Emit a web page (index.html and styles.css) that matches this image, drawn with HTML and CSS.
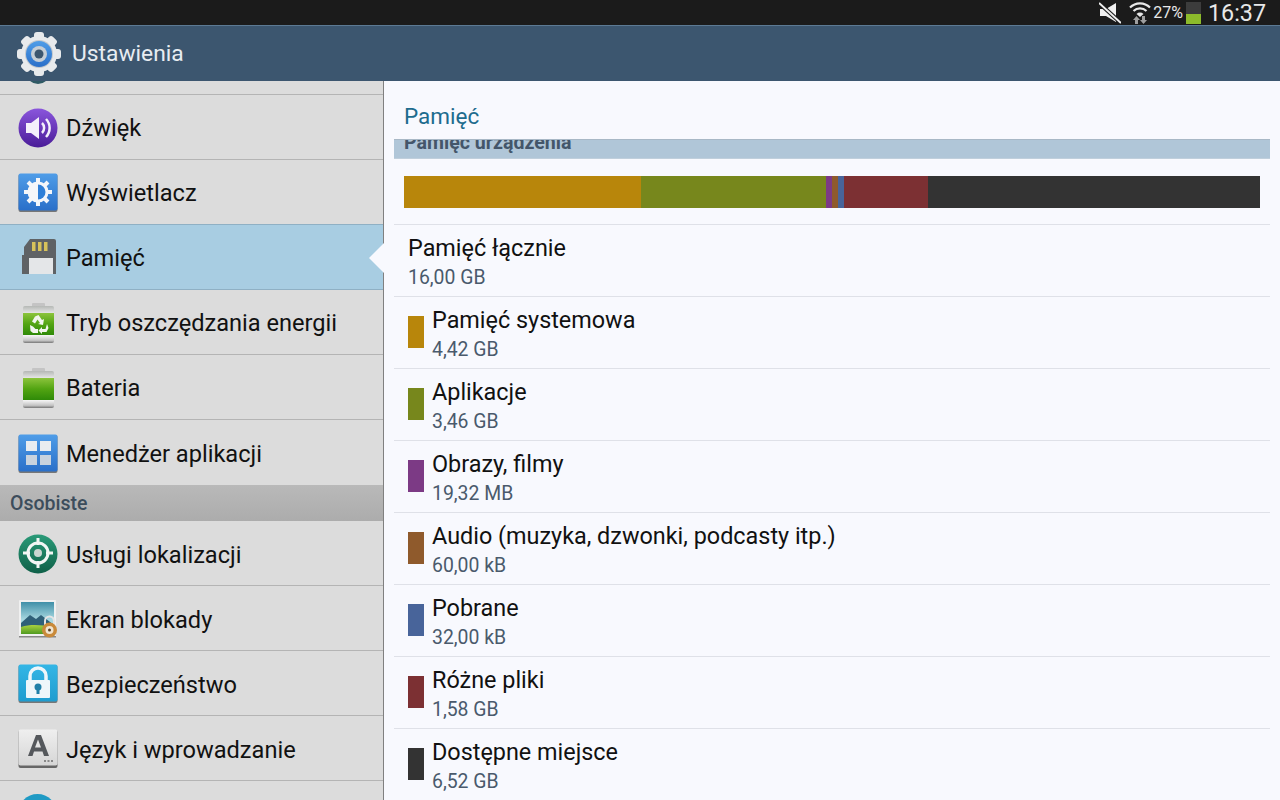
FILE: index.html
```html
<!DOCTYPE html>
<html lang="pl">
<head>
  <meta charset="UTF-8" />
  <title>Ustawienia</title>
  <link rel="stylesheet" href="styles.css">
</head>
<body>
  <!-- Shared icon gradients -->
  <svg class="icon-defs" width="0" height="0">
    <defs>
      <linearGradient id="g-blue" x1="0" y1="0" x2="0" y2="1">
        <stop offset="0" stop-color="#4f9de8"/>
        <stop offset="1" stop-color="#2a6fc9"/>
      </linearGradient>
      <linearGradient id="g-purple" x1="0" y1="0" x2="0" y2="1">
        <stop offset="0" stop-color="#8a55dc"/>
        <stop offset="1" stop-color="#4a1c98"/>
      </linearGradient>
      <linearGradient id="g-silver" x1="0" y1="0" x2="0" y2="1">
        <stop offset="0" stop-color="#b5b8b5"/>
        <stop offset="0.2" stop-color="#e8e8e8"/>
        <stop offset="0.8" stop-color="#f2f2f2"/>
        <stop offset="0.93" stop-color="#c4c4c4"/>
        <stop offset="1" stop-color="#777"/>
      </linearGradient>
      <linearGradient id="g-green" x1="0" y1="0" x2="0" y2="1">
        <stop offset="0" stop-color="#8cc43c"/>
        <stop offset="0.5" stop-color="#52a412"/>
        <stop offset="1" stop-color="#2f8a08"/>
      </linearGradient>
      <linearGradient id="g-teal" x1="0" y1="0" x2="0" y2="1">
        <stop offset="0" stop-color="#2a9a78"/>
        <stop offset="1" stop-color="#0f6048"/>
      </linearGradient>
      <linearGradient id="g-sky" x1="0" y1="0" x2="0" y2="1">
        <stop offset="0" stop-color="#3f8fa8"/>
        <stop offset="0.55" stop-color="#a8d8e0"/>
      </linearGradient>
      <linearGradient id="g-grass" x1="0" y1="0" x2="0" y2="1">
        <stop offset="0" stop-color="#a8d040"/>
        <stop offset="1" stop-color="#4f9a20"/>
      </linearGradient>
      <linearGradient id="g-key" x1="0" y1="0" x2="0" y2="1">
        <stop offset="0" stop-color="#efefef"/>
        <stop offset="1" stop-color="#d6d6d6"/>
      </linearGradient>
      <linearGradient id="g-cyan" x1="0" y1="0" x2="0" y2="1">
        <stop offset="0" stop-color="#34b6e6"/>
        <stop offset="1" stop-color="#1f9ccf"/>
      </linearGradient>
    </defs>
  </svg>

  <!-- Status bar -->
  <div class="status-bar">
    <svg class="st-mute" width="22" height="22" viewBox="0 0 22 22">
      <path d="M1 7h6l10-6v19L7 14H1z" fill="#f0f0f0"/>
      <path d="M0 1l22 20" stroke="#1b1b1b" stroke-width="4"/>
      <path d="M0 1l22 20" stroke="#f0f0f0" stroke-width="2"/>
    </svg>
    <svg class="st-wifi" width="22" height="24" viewBox="0 0 22 24">
      <path d="M1 6.500a14 14 0 0 1 20 0M4.500 10a9.500 9.500 0 0 1 13 0" fill="none" stroke="#e8e8e8" stroke-width="2.200"/>
      <path d="M7.500 13a5 5 0 0 1 7 0l-3.500 3z" fill="#e8e8e8"/>
      <path d="M6 23v-4H4l3.500-4 3.500 4H9v4zM13 15v4h-2l3.500 4 3.500-4h-2v-4z" fill="#a0a0a0"/>
    </svg>
    <span class="st-pct">27%</span>
    <div class="st-battery"><div class="st-battery-fill"></div></div>
    <span class="st-time">16:37</span>
  </div>

  <!-- Action bar -->
  <div class="action-bar">
    <svg class="app-icon" width="46" height="48" viewBox="0 0 46 48">
      <circle cx="23" cy="24" r="18" fill="#e8eaec"/>
      <g fill="#e8eaec">
        <rect x="18" y="2" width="10" height="44" rx="3"/>
        <rect x="18" y="2" width="10" height="44" rx="3" transform="rotate(45 23 24)"/>
        <rect x="18" y="2" width="10" height="44" rx="3" transform="rotate(90 23 24)"/>
        <rect x="18" y="2" width="10" height="44" rx="3" transform="rotate(135 23 24)"/>
      </g>
      <circle cx="23" cy="24" r="14" fill="#c3c8cd"/>
      <circle cx="23" cy="24" r="13" fill="url(#g-blue)"/>
      <circle cx="23" cy="24" r="8" fill="#c6ced6"/>
      <circle cx="23" cy="24" r="4.500" fill="#3c566f"/>
    </svg>
    <span class="app-title">Ustawienia</span>
  </div>

  <div class="content">
    <!-- Left list -->
    <div class="sidebar">
      <div class="peek"><div class="peek-icon"></div></div>

      <div class="nav-row">
        <svg class="nav-icon" viewBox="0 0 40 40">
          <circle cx="20" cy="20" r="19.500" fill="url(#g-purple)"/>
          <path d="M8 15h5l8-6v22l-8-6H8z" fill="#f4f0fb"/>
          <path d="M24 15a7 7 0 0 1 0 10M28 11a13 13 0 0 1 0 18" fill="none" stroke="#f4f0fb" stroke-width="2.500"/>
        </svg>
        <span>Dźwięk</span>
      </div>

      <div class="nav-row">
        <svg class="nav-icon" viewBox="0 0 40 40">
          <rect x="0.500" y="1" width="39" height="38" rx="2" fill="#777"/>
          <rect x="0.500" y="0.500" width="39" height="37" rx="2" fill="url(#g-blue)"/>
          <g stroke="#f4f6fa" stroke-width="4">
            <path d="M20 5v28M6 19h28M10 9l20 20M30 9L10 29"/>
          </g>
          <circle cx="20" cy="19" r="10.500" fill="#f4f6fa"/>
          <path d="M20 11.500a7.500 7.500 0 0 1 0 15z" fill="#2f7fd8"/>
        </svg>
        <span>Wyświetlacz</span>
      </div>

      <div class="nav-row selected">
        <svg class="nav-icon" viewBox="0 0 40 40">
          <path d="M12 1h24a2 2 0 0 1 2 2v33H4V17h2V9z" fill="#5f6265"/>
          <rect x="14" y="4" width="3.500" height="9" fill="#d8c25a"/>
          <rect x="20" y="4" width="3.500" height="9" fill="#d8c25a"/>
          <rect x="26" y="4" width="3.500" height="9" fill="#d8c25a"/>
          <rect x="11" y="20" width="24" height="16" fill="#e4e6e8"/>
        </svg>
        <span>Pamięć</span>
      </div>

      <div class="nav-row">
        <svg class="nav-icon" viewBox="0 0 40 40">
          <rect x="14" y="0" width="13" height="4" rx="1" fill="#c4c4c4"/>
          <rect x="5" y="3" width="31" height="37" rx="2" fill="url(#g-silver)"/>
          <rect x="5" y="10" width="31" height="22" fill="url(#g-green)"/>
          <path d="M20.500 12l3.500 5 2-1-1 6-5-1 2-1-2.500-3.500-2.500 4-3-2 3-5zM12 22l3 1.500 2.500 2.500h2.500v4h-5l-2.500-2zM29 21l1.500 4-2 4H24v2l-3.500-3.500L24 24v2h3.500z" fill="#f2f6ee"/>
        </svg>
        <span>Tryb oszczędzania energii</span>
      </div>

      <div class="nav-row">
        <svg class="nav-icon" viewBox="0 0 40 40">
          <rect x="14" y="0" width="13" height="4" rx="1" fill="#c4c4c4"/>
          <rect x="5" y="3" width="31" height="37" rx="2" fill="url(#g-silver)"/>
          <rect x="5" y="10" width="31" height="22" fill="url(#g-green)"/>
        </svg>
        <span>Bateria</span>
      </div>

      <div class="nav-row no-line">
        <svg class="nav-icon" viewBox="0 0 40 40">
          <rect x="0.500" y="1" width="39" height="38" rx="2" fill="#777"/>
          <rect x="0.500" y="0.500" width="39" height="37" rx="2" fill="url(#g-blue)"/>
          <rect x="8" y="7" width="11" height="10" fill="#e8ecf0"/>
          <rect x="22" y="7" width="11" height="10" fill="#e8ecf0"/>
          <rect x="8" y="21" width="11" height="10" fill="#c8d2de"/>
          <rect x="22" y="21" width="11" height="10" fill="#c8d2de"/>
        </svg>
        <span>Menedżer aplikacji</span>
      </div>

      <div class="nav-section">Osobiste</div>

      <div class="nav-row lower">
        <svg class="nav-icon" viewBox="0 0 40 40">
          <circle cx="20" cy="20" r="19.500" fill="url(#g-teal)"/>
          <circle cx="20" cy="19" r="10" fill="none" stroke="#f2f6f4" stroke-width="3"/>
          <circle cx="20" cy="19" r="4" fill="#c9d6d0"/>
          <path d="M20 4v7M20 27v7M5 19h7M28 19h7" stroke="#f2f6f4" stroke-width="3"/>
        </svg>
        <span>Usługi lokalizacji</span>
      </div>

      <div class="nav-row lower">
        <svg class="nav-icon" viewBox="0 0 40 40">
          <rect x="1" y="1" width="37" height="37" rx="1" fill="#f0f0f0"/>
          <rect x="1" y="37" width="37" height="1.500" fill="#888"/>
          <rect x="3" y="3" width="33" height="32" fill="url(#g-sky)"/>
          <path d="M3 24l9-8 6 4 5-4 13 10v4H3z" fill="#2f6078"/>
          <path d="M3 28c10-3 20-2 33 0v7H3z" fill="url(#g-grass)"/>
          <path d="M27 26v-4a4.500 4.500 0 0 1 9 0v4" fill="none" stroke="#e4e4e4" stroke-width="2"/>
          <circle cx="31.500" cy="31" r="7.500" fill="#c98a3a"/>
          <circle cx="31.500" cy="31" r="4" fill="#f0e4d0"/>
          <circle cx="31.500" cy="31" r="1.500" fill="#5a4020"/>
        </svg>
        <span>Ekran blokady</span>
      </div>

      <div class="nav-row lower">
        <svg class="nav-icon" viewBox="0 0 40 40">
          <rect x="0.500" y="1" width="39" height="38" rx="2" fill="#777"/>
          <rect x="0.500" y="0.500" width="39" height="37" rx="2" fill="url(#g-cyan)"/>
          <path d="M12 17v-5a8 8 0 0 1 16 0v5" fill="none" stroke="#eef6fa" stroke-width="3.500"/>
          <rect x="8" y="16" width="24" height="18" rx="1" fill="#eef6fa"/>
          <circle cx="20" cy="23" r="3.500" fill="#1f7fa8"/>
          <rect x="18.500" y="24" width="3" height="6" fill="#1f7fa8"/>
        </svg>
        <span>Bezpieczeństwo</span>
      </div>

      <div class="nav-row lower">
        <svg class="nav-icon" viewBox="0 0 40 40">
          <rect x="0.500" y="1" width="39" height="38" rx="2" fill="#666"/>
          <rect x="0.500" y="0.500" width="39" height="36" rx="2" fill="url(#g-key)"/>
          <path d="M18 6h5l8 21h-5l-1.500-4.500h-8.500L14.500 27H10zM17 18.500h6l-3-8z" fill="#55585c" fill-rule="evenodd"/>
          <path d="M26 31h2v2h-2zM29.500 31h2v2h-2zM33 31h2v2h-2z" fill="#888"/>
        </svg>
        <span>Język i wprowadzanie</span>
      </div>

      <div class="peek-bottom"><div class="peek-bottom-icon"></div></div>
    </div>

    <!-- small white arrow pointing to the selected row -->
    <div class="pointer"></div>

    <!-- Right pane -->
    <div class="pane">
      <div class="pane-title">Pamięć</div>
      <div class="pane-section"><span>Pamięć urządzenia</span></div>

      <div class="usage-bar">
        <div class="seg c-system" style="width: 237px"></div>
        <div class="seg c-apps" style="width: 185px"></div>
        <div class="seg c-images" style="width: 6px"></div>
        <div class="seg c-audio" style="width: 6px"></div>
        <div class="seg c-down" style="width: 6px"></div>
        <div class="seg c-misc" style="width: 84px"></div>
        <div class="seg c-free" style="width: 332px"></div>
      </div>

      <div class="mem-row">
        <div class="mem-text">
          <div class="mem-name">Pamięć łącznie</div>
          <div class="mem-size">16,00 GB</div>
        </div>
      </div>
      <div class="mem-row">
        <div class="swatch c-system"></div>
        <div class="mem-text">
          <div class="mem-name">Pamięć systemowa</div>
          <div class="mem-size">4,42 GB</div>
        </div>
      </div>
      <div class="mem-row">
        <div class="swatch c-apps"></div>
        <div class="mem-text">
          <div class="mem-name">Aplikacje</div>
          <div class="mem-size">3,46 GB</div>
        </div>
      </div>
      <div class="mem-row">
        <div class="swatch c-images"></div>
        <div class="mem-text">
          <div class="mem-name">Obrazy, filmy</div>
          <div class="mem-size">19,32 MB</div>
        </div>
      </div>
      <div class="mem-row">
        <div class="swatch c-audio"></div>
        <div class="mem-text">
          <div class="mem-name">Audio (muzyka, dzwonki, podcasty itp.)</div>
          <div class="mem-size">60,00 kB</div>
        </div>
      </div>
      <div class="mem-row">
        <div class="swatch c-down"></div>
        <div class="mem-text">
          <div class="mem-name">Pobrane</div>
          <div class="mem-size">32,00 kB</div>
        </div>
      </div>
      <div class="mem-row">
        <div class="swatch c-misc"></div>
        <div class="mem-text">
          <div class="mem-name">Różne pliki</div>
          <div class="mem-size">1,58 GB</div>
        </div>
      </div>
      <div class="mem-row">
        <div class="swatch c-free"></div>
        <div class="mem-text">
          <div class="mem-name">Dostępne miejsce</div>
          <div class="mem-size">6,52 GB</div>
        </div>
      </div>
    </div>
  </div>
</body>
</html>
```

FILE: styles.css
```css
:root {
  --system: #b8860b;
  --apps: #77871c;
  --images: #7c3a85;
  --audio: #8f5a2c;
  --down: #48649a;
  --misc: #7c3033;
  --free: #333333;
}

html, body {
  height: 100%;
}

body {
  margin: 0;
  width: 1280px;
  height: 800px;
  overflow: hidden;
  display: flex;
  flex-direction: column;
  font-family: Roboto, "Liberation Sans", sans-serif;
  background: #f8f9fe;
  color: #111;
}

.icon-defs {
  position: absolute;
}

/* Status bar */
.status-bar {
  height: 25px;
  flex: none;
  background: #1b1b1b;
  color: #e8e8e8;
  display: flex;
  align-items: center;
  justify-content: flex-end;
  padding-right: 14px;
}

.st-mute {
  margin-right: 8px;
}

.st-wifi {
  margin-right: 2px;
}

.st-pct {
  font-size: 16px;
  margin-right: 3px;
}

.st-battery {
  width: 15px;
  height: 22px;
  background: #3c3c3c;
  position: relative;
  margin-right: 7px;
}

.st-battery-fill {
  position: absolute;
  left: 0;
  right: 0;
  bottom: 0;
  height: 10px;
  background: #8dbb2b;
}

.st-time {
  font-size: 23.300px;
}

/* Action bar */
.action-bar {
  height: 56px;
  flex: none;
  box-sizing: border-box;
  background: #3c566f;
  border-top: 1px solid #5c7a94;
  display: flex;
  align-items: center;
  padding-left: 16px;
  color: #e8edf2;
}

.app-icon {
  margin-right: 10px;
}

.app-title {
  font-size: 22.800px;
}

.content {
  flex: 1;
  display: flex;
  min-height: 0;
  position: relative;
}

/* Left list */
.sidebar {
  width: 384px;
  flex: none;
  box-sizing: border-box;
  border-right: 1px solid #808080;
  background: #dcdcdc;
  overflow: hidden;
}

.peek {
  height: 13px;
  border-bottom: 1px solid #b4b4b4;
  overflow: hidden;
}

.peek-icon {
  width: 24px;
  height: 24px;
  margin: -21px 0 0 26px;
  border-radius: 50%;
  background: #2f5a64;
}

.nav-row {
  height: 65px;
  box-sizing: border-box;
  border-bottom: 1px solid #b4b4b4;
  display: flex;
  align-items: center;
  padding: 2px 0 0 18px;
  font-size: 23.600px;
}

.nav-row.no-line {
  border-bottom: none;
}

.nav-row.lower span {
  padding-top: 2px;
}

.nav-row.selected {
  height: 66px;
  margin-top: -1px;
  background: #a8cde2;
  border-top: 1px solid #8fb0c4;
  border-bottom: 1px solid #8fb0c4;
}

.nav-icon {
  width: 40px;
  height: 40px;
  flex: none;
  margin-right: 8px;
}

.nav-section {
  height: 36px;
  box-sizing: border-box;
  background: linear-gradient(#b9b9b9, #acacac);
  padding-left: 10px;
  line-height: 38px;
  font-size: 19.500px;
  font-weight: 500;
  color: #3c4d5c;
}

.peek-bottom {
  height: 30px;
  overflow: hidden;
  padding: 13px 0 0 18px;
}

.peek-bottom-icon {
  width: 39px;
  height: 39px;
  border-radius: 50%;
  background: #1f9ac4;
}

.pointer {
  position: absolute;
  top: 162px;
  left: 369px;
  width: 0;
  height: 0;
  border-top: 15px solid transparent;
  border-bottom: 15px solid transparent;
  border-right: 15px solid #f8f9fe;
}

/* Right pane */
.pane {
  flex: 1;
  padding: 0 10px;
  overflow: hidden;
}

.pane-title {
  height: 58px;
  box-sizing: border-box;
  padding: 22px 0 0 10px;
  font-size: 22.500px;
  line-height: 26px;
  color: #1d6c8e;
}

.pane-section {
  height: 20px;
  box-sizing: border-box;
  background: #b0c6d8;
  border-top: 1px solid #a8b8c6;
  border-bottom: 1px solid #c0cfdc;
  overflow: hidden;
  padding-left: 10px;
  font-size: 19.600px;
  font-weight: 700;
  line-height: 6px;
  color: #44566a;
}

.usage-bar {
  display: flex;
  height: 32px;
  margin: 17px 10px 16px;
}

.seg {
  flex: none;
}

.c-system { background: var(--system); }
.c-apps { background: var(--apps); }
.c-images { background: var(--images); }
.c-audio { background: var(--audio); }
.c-down { background: var(--down); }
.c-misc { background: var(--misc); }
.c-free { background: var(--free); }

.mem-row {
  height: 72px;
  box-sizing: border-box;
  border-top: 1px solid #dfe1e8;
  display: flex;
  align-items: flex-start;
  padding-left: 14px;
}

.swatch {
  width: 16px;
  height: 32px;
  flex: none;
  margin: 19px 8px 0 0;
}

.mem-text {
  padding-top: 8px;
}

.mem-name {
  font-size: 23.400px;
  line-height: 30px;
  color: #111;
}

.mem-size {
  font-size: 19.400px;
  line-height: 24px;
  margin-top: 3px;
  color: #4a5a6c;
}
```
